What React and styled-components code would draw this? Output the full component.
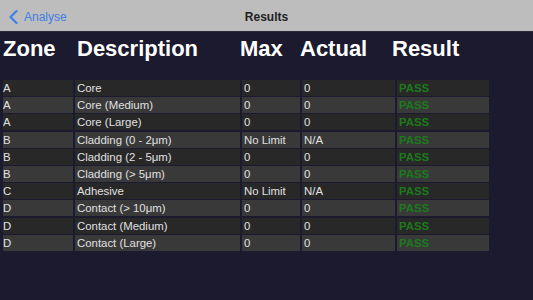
import React from "react";
import styled, { createGlobalStyle } from "styled-components";

const Global = createGlobalStyle`
  html, body { margin: 0; padding: 0; background: #1b1a2e; }
  body { font-family: "Liberation Sans", Arial, sans-serif; width: 533px; height: 300px; overflow: hidden; }
`;

const Page = styled.div`
  width: 533px;
  height: 300px;
  background: #1b1a2e;
  display: flex;
  flex-direction: column;
`;

const NavBar = styled.div`
  height: 31px;
  background: #bdbdbd;
  border-bottom: 1px solid #2a2a38;
  display: grid;
  grid-template-columns: 1fr auto 1fr;
  align-items: center;
`;

const Back = styled.div`
  display: flex;
  align-items: center;
  gap: 6px;
  padding-left: 9px;
  color: #3f80e4;
  font-size: 12px;
  padding-top: 2px;
`;

const Title = styled.div`
  font-size: 12px;
  font-weight: bold;
  color: #222;
  padding-top: 2px;
`;

const HeaderRow = styled.div`
  display: grid;
  grid-template-columns: 74px 163px 60px 92px auto;
  padding: 4px 0 0 3px;
  margin-bottom: 18px;
`;

const HeadCell = styled.div`
  color: #fff;
  font-size: 22px;
  font-weight: bold;
  line-height: 26px;
  white-space: nowrap;
`;

const Table = styled.div`
  display: flex;
  flex-direction: column;
  gap: 1.2px;
  padding-left: 3px;
`;

const Row = styled.div`
  display: grid;
  grid-template-columns: 70px 165px 58px 93px 92px;
  column-gap: 2px;
`;

const Cell = styled.div`
  background: ${(p) => (p.$alt ? "#393939" : "#282828")};
  color: ${(p) => (p.$pass ? "#1b7a1b" : "#e0e0e0")};
  font-weight: ${(p) => (p.$pass ? "bold" : "normal")};
  font-size: 11.4px;
  line-height: 16px;
  height: 16px;
  padding-left: ${(p) => (p.$first ? "0" : "2px")};
  white-space: nowrap;
  overflow: hidden;
`;

const rows = [
  ["A", "Core", "0", "0"],
  ["A", "Core (Medium)", "0", "0"],
  ["A", "Core (Large)", "0", "0"],
  ["B", "Cladding (0 - 2μm)", "No Limit", "N/A"],
  ["B", "Cladding (2 - 5μm)", "0", "0"],
  ["B", "Cladding (> 5μm)", "0", "0"],
  ["C", "Adhesive", "No Limit", "N/A"],
  ["D", "Contact (> 10μm)", "0", "0"],
  ["D", "Contact (Medium)", "0", "0"],
  ["D", "Contact (Large)", "0", "0"],
];

export default function App() {
  return (
    <Page>
      <Global />
      <NavBar>
        <Back>
          <svg width="9" height="14" viewBox="0 0 9 14">
            <polyline points="7.5,1 1.5,7 7.5,13" fill="none" stroke="#3f80e4" strokeWidth="2.2" strokeLinecap="round" strokeLinejoin="round" />
          </svg>
          Analyse
        </Back>
        <Title>Results</Title>
        <div />
      </NavBar>
      <HeaderRow>
        <HeadCell>Zone</HeadCell>
        <HeadCell>Description</HeadCell>
        <HeadCell>Max</HeadCell>
        <HeadCell>Actual</HeadCell>
        <HeadCell>Result</HeadCell>
      </HeaderRow>
      <Table>
        {rows.map((r, i) => (
          <Row key={i}>
            <Cell $alt={i % 2 === 1} $first>{r[0]}</Cell>
            <Cell $alt={i % 2 === 1}>{r[1]}</Cell>
            <Cell $alt={i % 2 === 1}>{r[2]}</Cell>
            <Cell $alt={i % 2 === 1}>{r[3]}</Cell>
            <Cell $alt={i % 2 === 1} $pass>PASS</Cell>
          </Row>
        ))}
      </Table>
    </Page>
  );
}
